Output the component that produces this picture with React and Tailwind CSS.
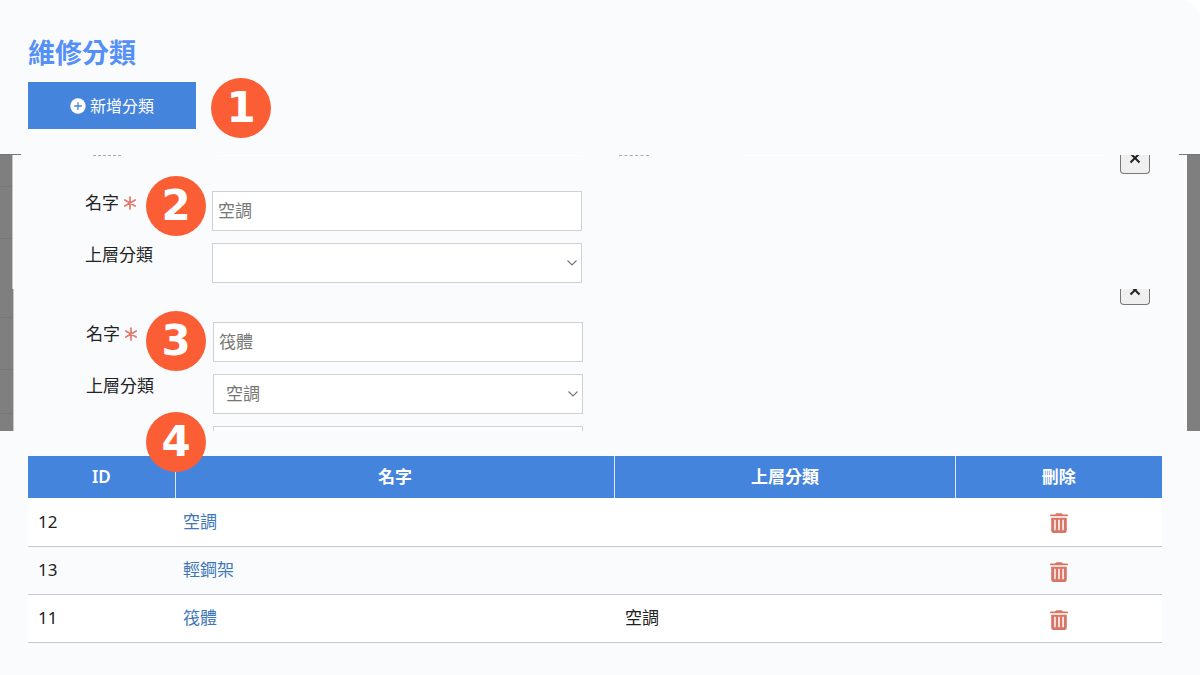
const rows = [
  { id: 12, name: "空調", parent: "" },
  { id: 13, name: "輕鋼架", parent: "" },
  { id: 11, name: "筏體", parent: "空調" },
];

function StepBadge({ children }) {
  return (
    <span className="flex size-[60px] shrink-0 items-center justify-center rounded-full bg-[#fb5e35] font-['DejaVu_Sans','Noto_Sans',sans-serif] text-[42px] leading-none font-bold text-white">
      {children}
    </span>
  );
}

function PlusIcon() {
  return (
    <svg viewBox="0 0 16 16" className="size-4" aria-hidden="true">
      <circle cx="8" cy="8" r="7.7" fill="currentColor" />
      <path d="M8 4.6v6.8M4.6 8h6.8" stroke="#4584dd" strokeWidth="1.3" strokeLinecap="round" />
    </svg>
  );
}

function RequiredIcon() {
  return (
    <svg viewBox="0 0 14 14" className="mt-[5px] size-3.5" aria-hidden="true">
      <path
        d="M7 1v12M1.8 4l10.4 6M12.2 4L1.8 10"
        stroke="#e2796b"
        strokeWidth="1.7"
        strokeLinecap="round"
      />
    </svg>
  );
}

function TrashIcon() {
  return (
    <svg viewBox="0 0 18 20" className="h-5 w-[18px]" aria-hidden="true">
      <path d="M0.8 1.6H5L6.4 0.2h5.2L13 1.6h4.2a.8.8 0 0 1 0 1.7H.8a.8.8 0 0 1 0-1.7z" fill="currentColor" />
      <path
        fillRule="evenodd"
        fill="currentColor"
        d="M1.2 4.8h15.6v12.4a2.8 2.8 0 0 1-2.8 2.8H4a2.8 2.8 0 0 1-2.8-2.8zM4.2 6.8v10.4h1.5V6.8zM8.2 6.8v10.4h1.6V6.8zM12.3 6.8v10.4h1.5V6.8z"
      />
    </svg>
  );
}

function Chevron() {
  return (
    <svg viewBox="0 0 12 8" className="pointer-events-none absolute top-4 right-1 h-2 w-3" aria-hidden="true">
      <path d="M1.5 1.5 6 6l4.5-4.5" fill="none" stroke="#777" strokeWidth="1.2" />
    </svg>
  );
}

// 分類表單：名字 + 上層分類
function CategoryForm({ step, name, parent, prefix, badgeClass }) {
  return (
    <div className="grid grid-cols-[127px_minmax(0,370px)] gap-y-3">
      <label htmlFor={`${prefix}-name`} className="flex items-start gap-1 leading-6">
        名字
        <RequiredIcon />
      </label>
      <div className="relative">
        <input
          id={`${prefix}-name`}
          type="text"
          defaultValue={name}
          className="h-10 w-full border border-[#cfd1d4] bg-white px-[5px] pb-1 text-[#777] outline-none"
        />
        <div className={`absolute right-full ${badgeClass}`}>
          <StepBadge>{step}</StepBadge>
        </div>
      </div>
      <label htmlFor={`${prefix}-parent`} className="leading-6">上層分類</label>
      <div className="relative">
        <select
          id={`${prefix}-parent`}
          defaultValue={parent}
          className="h-10 w-full appearance-none border border-[#cfd1d4] bg-white px-3 text-[#777] outline-none"
        >
          <option value=""></option>
          <option value="空調">空調</option>
        </select>
        <Chevron />
      </div>
    </div>
  );
}

function CloseButton({ className, iconClass }) {
  return (
    <button
      type="button"
      aria-label="關閉"
      className={`flex w-[30px] items-start justify-center overflow-hidden rounded-b-sm border border-t-0 border-[#777] bg-[#efefef] ${className}`}
    >
      <svg viewBox="0 0 12 12" className={`size-3 shrink-0 ${iconClass}`} aria-hidden="true">
        <path d="M1.5 1.5l9 9M10.5 1.5l-9 9" stroke="#222" strokeWidth="2" />
      </svg>
    </button>
  );
}

export default function App() {
  return (
    <main className="min-h-screen rounded-tr-[20px] bg-[#fafbfd] font-['Noto_Sans','Noto_Sans_CJK_TC',sans-serif] text-[17px] text-[#222]">
      <header className="h-[154px] px-7 pt-[33px]">
        <h1 className="text-[27px] leading-10 font-bold text-[#5590f6]">維修分類</h1>
        <div className="mt-[5px] flex items-start gap-[15px]">
          <button type="button" className="mt-1 flex h-[47px] w-[168px] items-center justify-center gap-1 bg-[#4584dd] text-base text-white">
            <PlusIcon />
            新增分類
          </button>
          <StepBadge>1</StepBadge>
        </div>
      </header>

      <div className="flex h-px justify-between">
        <span className="w-[21px] bg-[#777]" />
        <span className="w-[21px] bg-[#777]" />
      </div>

      <section className="flex h-[134px]">
        <div className="w-[13px] border-r border-[#c8c8c8] bg-[#7f7f7f]">
          <div className="h-8 border-b border-[#777]" />
          <div className="h-[52px] border-b border-[#777]" />
        </div>
        <div className="flex flex-1 justify-between pr-[37px] pl-[72px]">
          <div className="flex-1">
            {/* 上一列欄位的下緣 */}
            <div className="mb-[35px] flex h-px">
              <span className="ml-2 w-7 border-t border-dashed border-[#aaa]" />
              <span className="ml-[97px] w-[364px] bg-white" />
              <span className="ml-[37px] w-[30px] border-t border-dashed border-[#aaa]" />
              <span className="ml-[94px] w-[364px] bg-white" />
            </div>
            <CategoryForm step="2" name="空調" parent="" prefix="root" badgeClass="-top-[15px] mr-1.5" />
          </div>
          <CloseButton className="h-[19px]" iconClass="-mt-[3px]" />
        </div>
        <div className="w-[13px] bg-[#7f7f7f]" />
      </section>

      <section className="flex h-[142px]">
        <div className="w-3.5 border-r border-[#c8c8c8] bg-[#7f7f7f]">
          <div className="h-[29px] border-b border-[#777]" />
          <div className="h-[52px] border-b border-[#777]" />
          <div className="h-11 border-b border-[#777]" />
        </div>
        <div className="flex flex-1 justify-between overflow-hidden pr-[37px] pl-[72px]">
          <div className="flex-1 pt-[33px]">
            <CategoryForm step="3" name="筏體" parent="空調" prefix="child" badgeClass="-top-[11px] mr-[7px]" />
            <div className="mt-3 ml-[127px] h-10 max-w-[370px] border border-[#cfd1d4] bg-white" />
          </div>
          <CloseButton className="h-4" iconClass="-mt-[5px]" />
        </div>
        <div className="w-[13px] bg-[#7f7f7f]" />
      </section>

      <section className="relative pt-[25px] pr-[38px] pb-8 pl-7">
        <div className="absolute -top-[19px] left-[146px]">
          <StepBadge>4</StepBadge>
        </div>
        <table className="w-full table-fixed border-collapse">
          <thead>
            <tr className="h-[42px] bg-[#4584dd] text-white">
              <th className="w-[147px] border-r border-[#dbe8fa] font-semibold">ID</th>
              <th className="w-[38.8%] border-r border-[#dbe8fa] font-bold">名字</th>
              <th className="w-[30%] border-r border-[#dbe8fa] font-bold">上層分類</th>
              <th className="font-bold">刪除</th>
            </tr>
          </thead>
          <tbody>
            {rows.map((row) => (
              <tr key={row.id} className="h-12 border-b border-[#c6c9d0] odd:bg-white">
                <td className="px-2.5">{row.id}</td>
                <td className="px-2">
                  <a href="#" className="text-[#4077b8]">{row.name}</a>
                </td>
                <td className="px-2.5">{row.parent}</td>
                <td className="text-center">
                  <button type="button" aria-label="刪除" className="align-middle text-[#d97565]">
                    <TrashIcon />
                  </button>
                </td>
              </tr>
            ))}
          </tbody>
        </table>
      </section>
    </main>
  );
}
